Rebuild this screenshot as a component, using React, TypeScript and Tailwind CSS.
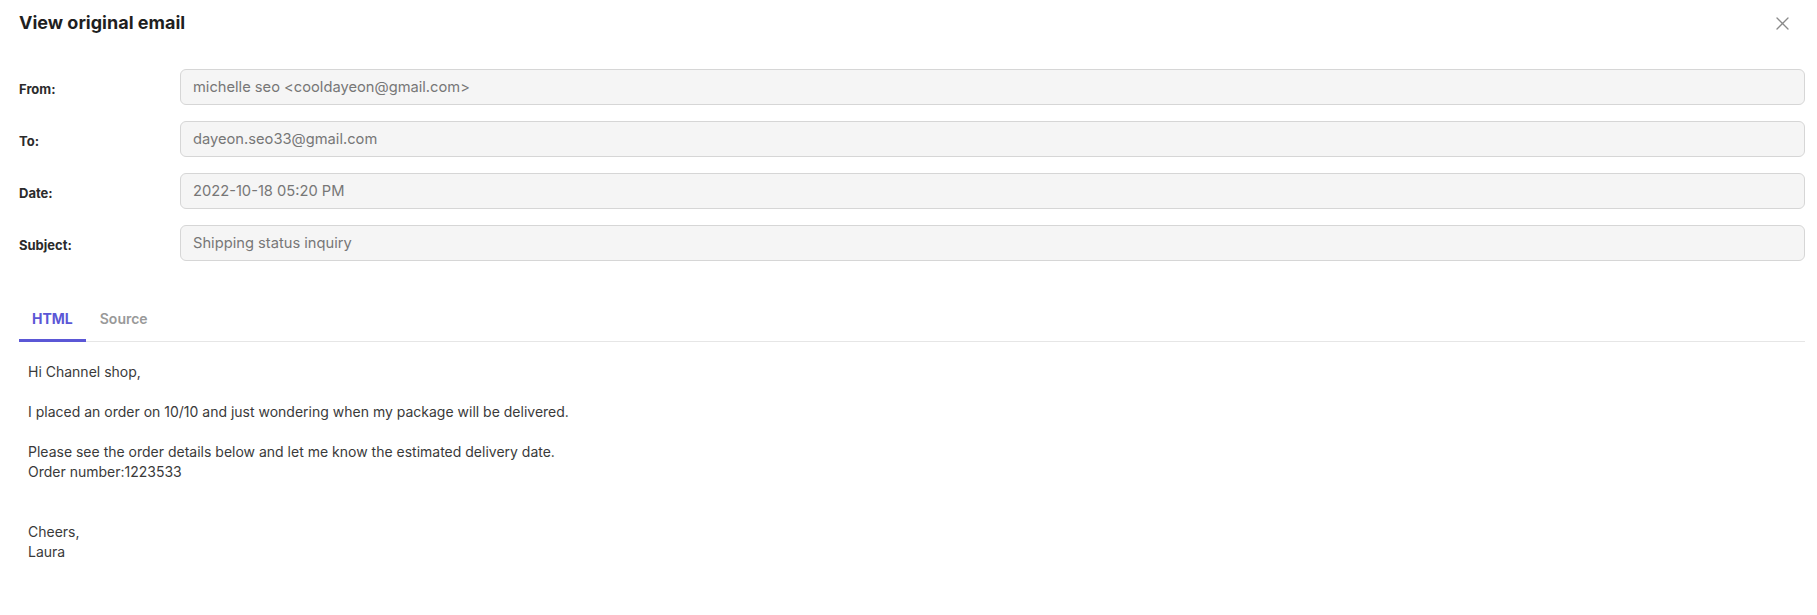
const fields = [
  { label: 'From:', value: 'michelle seo <cooldayeon@gmail.com>' },
  { label: 'To:', value: 'dayeon.seo33@gmail.com' },
  { label: 'Date:', value: '2022-10-18 05:20 PM' },
  { label: 'Subject:', value: 'Shipping status inquiry' },
]

const body = [
  'Hi Channel shop,',
  '',
  'I placed an order on 10/10 and just wondering when my package will be delivered.',
  '',
  'Please see the order details below and let me know the estimated delivery date.',
  'Order number:1223533',
  '',
  '',
  'Cheers,',
  'Laura',
]

export default function App() {
  return (
    <div className="min-h-screen bg-white pl-[19px] pr-[12px] pt-[11px] font-['Inter',sans-serif]">
      <div className="flex h-6 items-center justify-between">
        <h2 className="text-[18px] font-bold leading-6 text-[#1f1f1f]">View original email</h2>
        <button className="mr-[11px] grid size-6 place-items-center text-[#8a8a8a]">
          <svg width="13" height="13" viewBox="0 0 13 13" fill="none" stroke="currentColor" strokeWidth="1.3" strokeLinecap="round">
            <path d="M1 1l11 11M12 1L1 12" />
          </svg>
        </button>
      </div>

      <div className="mt-[34px] flex flex-col gap-4">
        {fields.map((f) => (
          <div key={f.label} className="grid grid-cols-[161px_1fr] items-center">
            <span className="pt-[3px] text-[13px] font-bold leading-5 text-[#2b2b2b]">{f.label}</span>
            <div className="flex h-9 items-center rounded-md border border-[#d6d6d6] bg-[#f5f5f5] px-[12px] text-[14.7px] text-[#777]">
              {f.value}
            </div>
          </div>
        ))}
      </div>

      <div className="mt-[35px] flex border-b border-[#e6e6e6]">
        <button className="-mb-px border-b-[3px] border-[#5b57d6] px-[13px] pb-[10px] pt-[13px] text-[14px] font-bold leading-5 text-[#5b57d6]">
          HTML
        </button>
        <button className="-mb-px border-b-[3px] border-transparent px-[14px] pb-[10px] pt-[13px] text-[14px] font-semibold leading-5 text-[#999]">
          Source
        </button>
      </div>

      <div className="pl-[9px] pt-[20px] text-[14px] leading-5 text-[#3a3a3a]">
        {body.map((l, i) => (
          <div key={i} className="h-5">{l}</div>
        ))}
      </div>
    </div>
  )
}
